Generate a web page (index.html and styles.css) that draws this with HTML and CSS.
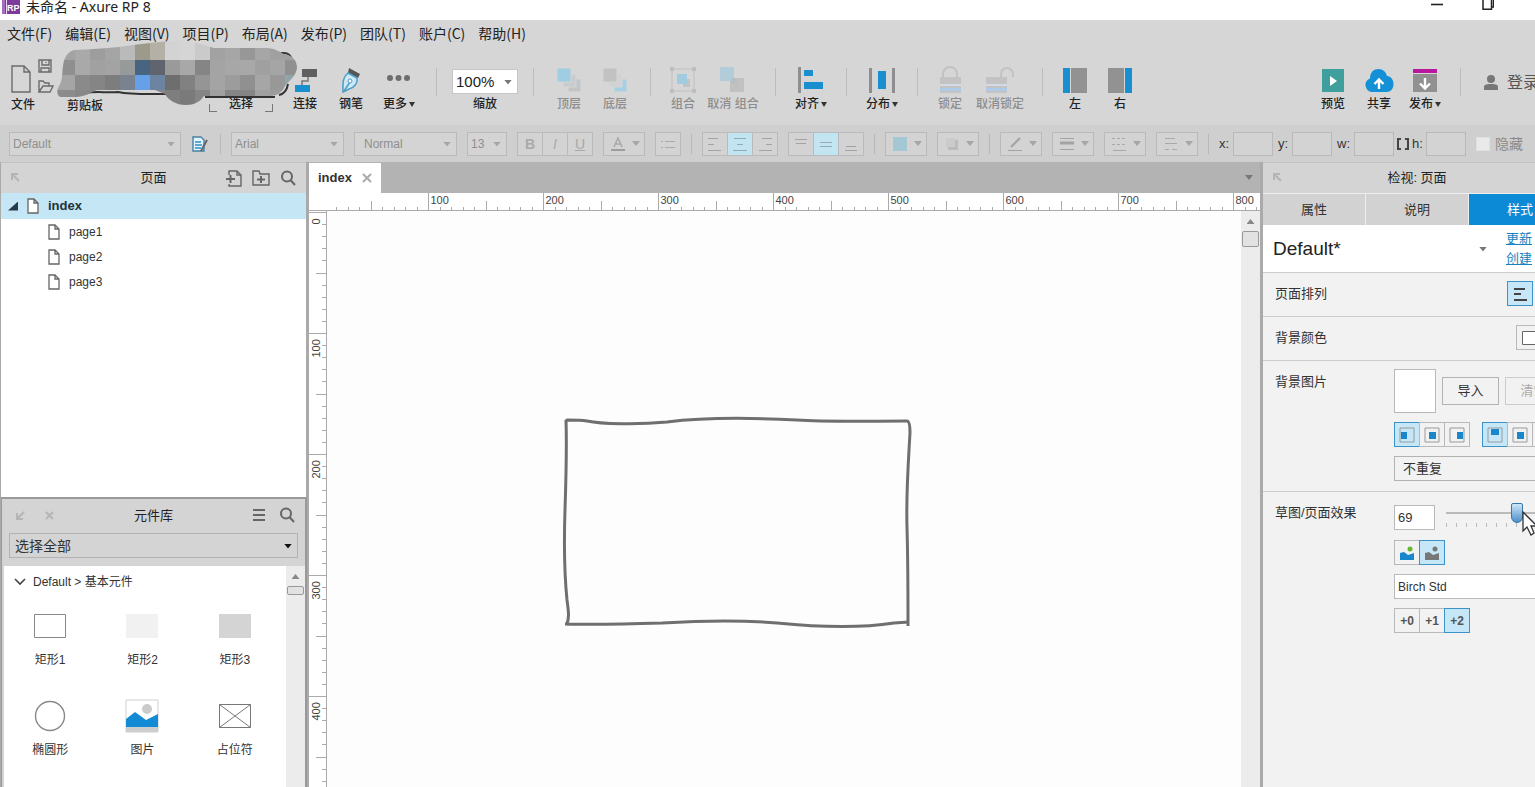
FILE: index.html
```html
<!DOCTYPE html>
<html lang="zh-CN">
<head>
<meta charset="utf-8">
<title>未命名 - Axure RP 8</title>
<link rel="stylesheet" href="styles.css">
</head>
<body>
<div class="app">
  <header class="titlebar">
    <svg class="logo" width="18" height="14" viewBox="0 0 18 14"><path d="M0 0h18v14H0z" fill="#7d3c9b"/><path d="M0 0h3v14H0z" fill="#a66cc0"/><path d="M4 0h1v14H4z" fill="#e9d9f0"/><text x="5" y="11" class="logo-text">RP</text></svg>
    <h1 class="title">未命名 - Axure RP 8</h1>
    <div class="window-buttons">
      <button class="win-btn" aria-label="最小化"><svg width="12" height="12"><path d="M0 4.5h12" stroke="#222" stroke-width="1.6"/></svg></button>
      <button class="win-btn" aria-label="还原"><svg width="12" height="12"><path d="M1 0v9.3h8.500V0M10 7h1.500V0" fill="none" stroke="#222" stroke-width="1.5"/></svg></button>
    </div>
  </header>

  <nav class="menu">
    <button>文件(F)</button><button>编辑(E)</button><button>视图(V)</button><button>项目(P)</button><button>布局(A)</button><button>发布(P)</button><button>团队(T)</button><button>账户(C)</button><button>帮助(H)</button>
  </nav>

  <div class="toolbar">
    <button class="tool tool-file"><svg width="44" height="38" viewBox="0 0 44 38" fill="none" stroke="#6b6b6b" stroke-width="1.400"><path d="M1 9h12l6 6v20H1zM13 9v6h6"/><path d="M28 3h12v12H28zM31 3v5h7V3M30 15v-4h8v4M35 5v1"/><path d="M28 35V24h4l2 2h4v3M28 35l4-6h10l-3 6z"/></svg><span>文件</span></button>
    <button class="tool tool-clip"><span>剪贴板</span></button>
    <button class="tool tool-select"><span class="bracketed">选择</span></button>
    <button class="tool"><svg width="28" height="28" viewBox="0 0 28 28"><path d="M11 3h15v8H11z" fill="#5f5f5f"/><path d="M17 11v4h-6v4" fill="none" stroke="#777" stroke-width="1.500"/><path d="M4 19h15v7H4z" fill="#1a8fd0"/></svg><span>连接</span></button>
    <button class="tool"><svg width="28" height="28" viewBox="0 0 28 28"><path d="M12 2l11 6-2 4-10-5z" fill="#555"/><path d="M11 7l9 5c1 5-3 10-8 11l-6 3c0-8-1-14 5-19z" fill="#cfe8f5" stroke="#4f9fcb" stroke-width="1.600"/><path d="M7 25l6-9" stroke="#4f9fcb" stroke-width="1.500"/><circle cx="13" cy="15" r="2" fill="#fff" stroke="#4f9fcb"/></svg><span>钢笔</span></button>
    <button class="tool tool-right"><svg width="28" height="28" viewBox="0 0 28 28" fill="#6d6d6d"><circle cx="5" cy="12" r="3"/><circle cx="13.500" cy="12" r="3"/><circle cx="22" cy="12" r="3"/></svg><span>更多<i class="caret"></i></span></button>
    <i class="sep"></i>
    <div class="tool tool-zoom"><div class="drop zoom"><select id="zoom"><option>100%</option></select></div><label for="zoom">缩放</label></div>
    <i class="sep"></i>
    <button class="tool" disabled><svg width="28" height="28" viewBox="0 0 28 28" stroke="#d6d6d6"><path d="M13 13h13v13H13z" fill="#c2c5c8"/><path d="M8 8h13v13H8z" fill="#c9cccf"/><path d="M2 2h14v14H2z" fill="#9fcde2"/></svg><span>顶层</span></button>
    <button class="tool" disabled><svg width="28" height="28" viewBox="0 0 28 28" stroke="#d6d6d6"><path d="M13 13h13v13H13z" fill="#a5d0e4"/><path d="M8 8h13v13H8z" fill="#d0d2d3"/><path d="M2 2h14v14H2z" fill="#c2c2c2"/></svg><span>底层</span></button>
    <i class="sep"></i>
    <button class="tool tool-narrow" disabled><svg width="28" height="28" viewBox="0 0 28 28"><path d="M3 3h22v22H3z" fill="none" stroke="#c0c0c0"/><path d="M14 13h7v8h-7z" fill="#bfc4c8"/><path d="M8 8h10v10H8z" fill="#a1cce0"/><path d="M1 1h4v4H1zM23 1h4v4h-4zM1 23h4v4H1zM23 23h4v4h-4z" fill="#bebebe"/></svg><span>组合</span></button>
    <button class="tool tool-wide" disabled><svg width="28" height="28" viewBox="0 0 28 28"><path d="M11 12h14v14H11z" fill="#c1c1c1"/><path d="M1 1h14v14H1z" fill="#b2ccda"/><path d="M12 12h6v6h-6z" fill="#b8bec2"/></svg><span>取消 组合</span></button>
    <i class="sep"></i>
    <button class="tool"><svg width="28" height="28" viewBox="0 0 28 28"><path d="M1 1h3v26H1z" fill="#8f8f8f"/><path d="M7 4h9v6H7zM7 16h19v7H7z" fill="#1a8fd0"/></svg><span>对齐<i class="caret"></i></span></button>
    <i class="sep"></i>
    <button class="tool"><svg width="28" height="28" viewBox="0 0 28 28"><path d="M1 2h3v25H1zM24 2h3v25h-3z" fill="#8f8f8f"/><path d="M10 5h8v18h-8z" fill="#1a8fd0"/></svg><span>分布<i class="caret"></i></span></button>
    <i class="sep"></i>
    <button class="tool tool-narrow" disabled><svg width="28" height="28" viewBox="0 0 28 28"><path d="M7 12V8a7 7 0 0 1 14 0v4" fill="none" stroke="#c2c2c2" stroke-width="2"/><path d="M4 11h21v16H4z" fill="#c3c3c3"/><path d="M4 18h21v2H4z" fill="#d3dbe4"/><path d="M4 22h21v3H4z" fill="#adcbe4"/></svg><span>锁定</span></button>
    <button class="tool tool-wide" disabled><svg width="28" height="28" viewBox="0 0 28 28"><path d="M15 11V8a6 6 0 0 1 12 0v3" fill="none" stroke="#c2c2c2" stroke-width="2"/><path d="M0 11h21v16H0z" fill="#c3c3c3"/><path d="M0 18h21v2H0z" fill="#d3dbe4"/><path d="M0 22h21v3H0z" fill="#adcbe4"/></svg><span>取消锁定</span></button>
    <i class="sep"></i>
    <button class="tool tool-narrow"><svg width="28" height="28" viewBox="0 0 28 28"><path d="M2 2h7v25H2z" fill="#1a8fd0"/><path d="M10 2h16v25H10z" fill="#929292"/></svg><span>左</span></button>
    <button class="tool tool-right"><svg width="28" height="28" viewBox="0 0 28 28"><path d="M19 2h7v25h-7z" fill="#1a8fd0"/><path d="M2 2h16v25H2z" fill="#929292"/></svg><span>右</span></button>
    <div class="toolbar-end">
      <button class="tool"><svg width="28" height="28" viewBox="0 0 28 28"><path d="M3 3h22v23H3z" fill="#3f9f9c"/><path d="M11 10l7 5-7 5z" fill="#fff"/></svg><span>预览</span></button>
      <button class="tool"><svg width="30" height="28" viewBox="0 0 30 28"><path d="M8 26a7 7 0 0 1-2-13.500C6 6 10 3 14.500 3S22 6 23 10c4 0 6.500 4 6.500 8 0 5-3 8-7 8z" fill="#1490d6"/><path d="M15 23v-9M10.500 18l4.500-4.500 4.500 4.500" fill="none" stroke="#fff" stroke-width="2.400"/></svg><span>共享</span></button>
      <button class="tool"><svg width="28" height="28" viewBox="0 0 28 28"><path d="M2 3h24v4H2z" fill="#b9189e"/><path d="M2 8h24v18H2z" fill="#919191"/><path d="M14 12v10M9 17.500l5 5 5-5" fill="none" stroke="#fff" stroke-width="2.400"/></svg><span>发布<i class="caret"></i></span></button>
      <i class="sep"></i>
      <button class="login"><svg width="16" height="18" viewBox="0 0 16 18" fill="#777"><circle cx="8" cy="5" r="4"/><path d="M1 16v-3c0-3 4-3 7-3s7 0 7 3v3z"/></svg>登录</button>
    </div>
    <svg class="mosaic" width="242" height="66" viewBox="56 40 242 66" aria-hidden="true">
      <defs><clipPath id="blob"><path d="M75 50C95 49 115 48 133 45C150 43 165 41 181 41C195 42 205 45 214 48H268C276 49 280 52 284 54C292 55 297 60 297 68C296 76 290 80 285 86C282 93 276 96 270 96H204C200 102 194 105 186 105C176 105 168 100 165 94L155 90H97C90 93 84 97 76 97H62C57 97 56 91 59 86C63 80 62 72 63 66C64 57 68 51 75 50Z"/></clipPath></defs>
      <path d="M272 53h12c4 0 7 3 8 7M288 84c-1 6-4 10-9 11M86 93c10-2 20 0 32-1 14 3 30 2 52 2M205 97h70" fill="none" stroke="#333" stroke-width="2"/>
      <g clip-path="url(#blob)" id="mosaic-cells"></g>
    </svg>
  </div>

  <div class="format">
    <div class="drop f-style"><select aria-label="样式" disabled><option>Default</option></select></div>
    <button class="plain" aria-label="样式管理"><svg width="19" height="18" viewBox="0 0 19 18"><path d="M2 2h8l3 3v11H2z" fill="#e3f3fb" stroke="#4682a5" stroke-width="1.400"/><path d="M4 7h6M4 10h7M4 13h6" stroke="#2b93c8" stroke-width="1.300"/><path d="M16 5l-6 11" stroke="#666" stroke-width="2"/></svg></button>
    <i class="bar"></i>
    <div class="drop f-font"><select aria-label="字体" disabled><option>Arial</option></select></div>
    <div class="drop f-weight"><select aria-label="字重" disabled><option>Normal</option></select></div>
    <div class="drop f-size"><select aria-label="字号" disabled><option>13</option></select></div>
    <div class="seg"><button disabled><b>B</b></button><button disabled><em>I</em></button><button disabled><u>U</u></button></div>
    <button class="pick" disabled aria-label="文字颜色"><svg width="18" height="18" viewBox="0 0 18 18"><path d="M5 12l4-9 4 9M6.500 9h5" fill="none" stroke="#a9a9a9" stroke-width="1.500"/><path d="M2 14h14v2H2z" fill="#9d9d9d"/></svg><i class="arrow"></i></button>
    <div class="seg"><button disabled aria-label="列表"><svg width="18" height="18" viewBox="0 0 18 18" stroke="#ababab"><path d="M2 6.500h2M6 6.500h10M2 12.500h2M6 12.500h10"/></svg></button></div>
    <i class="bar"></i>
    <div class="seg">
      <button disabled aria-label="左对齐"><svg width="18" height="18" viewBox="0 0 18 18" stroke="#a3a3a3"><path d="M2 3.500h10M2 9.500h6M2 15.500h13"/></svg></button>
      <button class="on" aria-label="居中"><svg width="18" height="18" viewBox="0 0 18 18" stroke="#93aab4"><path d="M3 3.500h12M6 9.500h6M2 15.500h14"/></svg></button>
      <button disabled aria-label="右对齐"><svg width="18" height="18" viewBox="0 0 18 18" stroke="#a3a3a3"><path d="M6 3.500h10M10 9.500h6M3 15.500h13"/></svg></button>
    </div>
    <div class="seg">
      <button disabled aria-label="顶部"><svg width="18" height="18" viewBox="0 0 18 18" stroke="#a3a3a3"><path d="M3 4.500h12M4 8.500h10"/></svg></button>
      <button class="on" aria-label="中部"><svg width="18" height="18" viewBox="0 0 18 18" stroke="#93aab4"><path d="M3 7.500h12M3 11.500h12"/></svg></button>
      <button disabled aria-label="底部"><svg width="18" height="18" viewBox="0 0 18 18" stroke="#a3a3a3"><path d="M4 11.500h10M3 15.500h12"/></svg></button>
    </div>
    <i class="bar"></i>
    <button class="pick" disabled aria-label="填充"><svg width="18" height="18"><path d="M2 2h14v14H2z" fill="#a4c7d4"/></svg><i class="arrow"></i></button>
    <button class="pick" disabled aria-label="阴影"><svg width="18" height="18"><path d="M5 5h10v10H5z" fill="#bcbcbc"/><path d="M3 3h9v9H3z" fill="#cbcbcb"/></svg><i class="arrow"></i></button>
    <i class="bar"></i>
    <button class="pick" disabled aria-label="线条颜色"><svg width="18" height="18" stroke="#a3a3a3"><path d="M5 12l9-9" stroke-width="2"/><path d="M2 15.500h14"/></svg><i class="arrow"></i></button>
    <button class="pick" disabled aria-label="线宽"><svg width="18" height="18" stroke="#a3a3a3"><path d="M2 3.500h14" /><path d="M2 8h14" stroke-width="3"/><path d="M2 14.500h14"/></svg><i class="arrow"></i></button>
    <button class="pick" disabled aria-label="线型"><svg width="18" height="18" stroke="#a9a9a9"><path d="M2 3.500h14" stroke-dasharray="3 2"/><path d="M2 9.500h14" stroke-dasharray="3 2"/><path d="M3 15.500h13"/></svg><i class="arrow"></i></button>
    <button class="pick" disabled aria-label="箭头"><svg width="18" height="18" stroke="#a9a9a9"><path d="M3 3.500h10M3 8.500h12M3 14.500h4M10 14.500h5"/></svg><i class="arrow"></i></button>
    <i class="bar"></i>
    <div class="coords">
      <label>x:<input></label><label>y:<input></label><label class="w">w:<input></label>
      <svg width="14" height="14" viewBox="0 0 14 14" fill="none" stroke="#444" stroke-width="2"><path d="M5 2H2v10h3M9 2h3v10H9"/></svg>
      <label>h:<input></label>
    </div>
    <label class="hide"><input type="checkbox" disabled>隐藏</label>
  </div>

  <main class="work">
    <aside class="left">
      <section class="pages">
        <header class="head"><svg width="12" height="12" class="dim"><path d="M2 8V2h6M2 2l7 7" /></svg><h2>页面</h2>
          <div class="head-icons">
            <button class="plain" aria-label="添加页面"><svg width="18" height="18" viewBox="0 0 18 18" class="ico"><path d="M4 6V2h8l4 4v11H4v-2M12 2v4h4"/><path d="M1 10h9M5.500 6v8" stroke-width="2"/></svg></button>
            <button class="plain" aria-label="添加文件夹"><svg width="18" height="18" viewBox="0 0 18 18" class="ico"><path d="M1 16V2h6l1 3h9v11z"/><path d="M5 10.500h8M9 7v7" stroke-width="2"/></svg></button>
            <button class="plain" aria-label="搜索"><svg width="18" height="18" viewBox="0 0 18 18" class="ico lens"><circle cx="8" cy="7.500" r="5"/><path d="M11.500 11l4.500 5"/></svg></button>
          </div>
        </header>
        <ul class="tree">
          <li class="node root"><i class="open"></i><svg width="12" height="16" class="doc"><path d="M1 1h6l4 4v10H1zM7 1v4h4"/></svg>index</li>
          <li class="node"><svg width="12" height="16" class="doc"><path d="M1 1h6l4 4v10H1zM7 1v4h4"/></svg>page1</li>
          <li class="node"><svg width="12" height="16" class="doc"><path d="M1 1h6l4 4v10H1zM7 1v4h4"/></svg>page2</li>
          <li class="node"><svg width="12" height="16" class="doc"><path d="M1 1h6l4 4v10H1zM7 1v4h4"/></svg>page3</li>
        </ul>
      </section>
      <section class="library">
        <header class="head"><div class="pair"><svg width="12" height="12" class="dim"><path d="M2 3v6h6M2 9l7-7"/></svg><svg width="12" height="12" class="dim"><path d="M2 2l7 7M9 2l-7 7"/></svg></div><h2>元件库</h2>
          <div class="head-icons">
            <button class="plain" aria-label="菜单"><svg width="18" height="18" viewBox="0 0 18 18" class="ico"><path d="M1 3h12M1 8h12M1 13h12" stroke-width="2"/></svg></button>
            <button class="plain" aria-label="搜索"><svg width="18" height="18" viewBox="0 0 18 18" class="ico lens"><circle cx="7" cy="6.500" r="5"/><path d="M10.500 10l4.500 5"/></svg></button>
          </div>
        </header>
        <div class="drop lib-select"><select aria-label="元件库"><option>选择全部</option></select></div>
        <div class="lib-body">
          <div class="lib-list">
            <h3><svg width="12" height="8"><path d="M1 1l5 5 5-5" fill="none" stroke="#444" stroke-width="1.600"/></svg>Default &gt; 基本元件</h3>
            <ul class="widgets">
              <li><svg width="34" height="34"><path d="M1.500 5.500h31v23h-31z" fill="#fff" stroke="#888"/></svg>矩形1</li>
              <li><svg width="34" height="34"><path d="M1 5h32v24H1z" fill="#f1f1f1"/></svg>矩形2</li>
              <li><svg width="34" height="34"><path d="M1 5h32v24H1z" fill="#d4d4d4"/></svg>矩形3</li>
              <li><svg width="34" height="34"><circle cx="17" cy="17" r="14.500" fill="#fff" stroke="#888" stroke-width="1.400"/></svg>椭圆形</li>
              <li><svg width="34" height="34"><path d="M1 1h32v32H1z" fill="#fff" stroke="#d0d0d0"/><circle cx="22" cy="10" r="5" fill="#cbcbcb"/><path d="M1 28V20l9-7 11 8 12-6v13z" fill="#128bd4"/><path d="M1 28h32v5H1z" fill="#cdcdcd"/></svg>图片</li>
              <li><svg width="34" height="34"><path d="M1.500 5.500h31v23h-31zl31 23M32.500 5.500l-31 23" fill="#fff" stroke="#777"/></svg>占位符</li>
            </ul>
          </div>
          <div class="scroll small"><i class="up"></i><i class="thumb"></i></div>
        </div>
      </section>
    </aside>

    <section class="center">
      <div class="tabs"><button class="tab">index<svg width="10" height="10"><path d="M1 1l8 8M9 1L1 9" stroke="#aaa" stroke-width="2"/></svg></button><i class="arrow"></i></div>
      <div class="ruler-top"><svg id="ruler-x" class="ruler"></svg></div>
      <div class="stage">
        <svg id="ruler-y" class="ruler side"></svg>
        <div class="canvas">
          <svg class="sketch" width="354" height="216" viewBox="560 414 354 216" fill="none" stroke="#6f6f6f" stroke-width="3" stroke-linejoin="round"><path d="M566 421l1-1c8 0 14 0 20 1 14 3 50 4 80 1 40-5 90-4 130-2 30 2 70 1 110 1q3 0 3 12c-2 35-4 60-3 95 1 33 1 60 1 98"/><path d="M566 420c1 30 0 60-1 90-1 30-1 60 2 90 2 14 2 18 0 24"/><path d="M565 624c30 1 65 0 97-1 33-2 80-3 115 0 40 4 85 5 117 0l15-1" /></svg>
        </div>
        <div class="scroll"><i class="up"></i><i class="thumb"></i></div>
      </div>
    </section>

    <aside class="right">
      <div class="inspector">
        <header class="head"><svg width="12" height="12" class="dim"><path d="M2 8V2h6M2 2l7 7" /></svg><h2>检视: 页面</h2></header>
        <div class="itabs"><button>属性</button><button>说明</button><button class="active">样式</button></div>
        <div class="style-row"><div class="drop big"><select aria-label="页面样式"><option>Default*</option></select></div><div class="links"><a href="#">更新</a><a href="#">创建</a></div></div>
        <div class="row one"><span>页面排列</span><button class="sq on push" aria-label="左对齐"><svg width="18" height="18" stroke="#444" stroke-width="2"><path d="M3 4h11M3 9h7M3 15h13"/></svg></button></div>
        <div class="row one"><span>背景颜色</span><button class="sq color" aria-label="颜色"><svg width="16" height="16"><path d="M1.500 1.500h14v13h-14z" fill="#fff" stroke="#666"/></svg></button></div>
        <div class="row"><span>背景图片</span>
          <div class="controls">
            <div class="line imgline"><i class="preview"></i><button class="btn">导入</button><button class="btn" disabled>清空</button></div>
            <div class="line place">
              <div class="group"><button class="sq on" aria-label="左"><svg width="16" height="16"><path d="M1 1h14v14H1z" fill="none" stroke="#999"/><path d="M2 5h6v7H2z" fill="#1a86cc"/></svg></button><button class="sq" aria-label="中"><svg width="16" height="16"><path d="M1 1h14v14H1z" fill="none" stroke="#999"/><path d="M5 5h7v7H5z" fill="#1a86cc"/></svg></button><button class="sq" aria-label="右"><svg width="16" height="16"><path d="M1 1h14v14H1z" fill="none" stroke="#999"/><path d="M8 5h6v7H8z" fill="#1a86cc"/></svg></button></div>
              <div class="group"><button class="sq on" aria-label="上"><svg width="16" height="16"><path d="M1 1h14v14H1z" fill="none" stroke="#999"/><path d="M4 2h8v6H4z" fill="#1a86cc"/></svg></button><button class="sq" aria-label="中"><svg width="16" height="16"><path d="M1 1h14v14H1z" fill="none" stroke="#999"/><path d="M5 5h7v7H5z" fill="#1a86cc"/></svg></button><button class="sq" aria-label="下"><svg width="16" height="16"><path d="M1 1h14v14H1z" fill="none" stroke="#999"/><path d="M4 8h8v6H4z" fill="#1a86cc"/></svg></button></div>
            </div>
            <div class="drop repeat"><select aria-label="重复"><option>不重复</option></select></div>
          </div>
        </div>
        <div class="row last"><label for="amount">草图/页面效果</label>
          <div class="controls">
            <div class="line slide"><input id="amount" class="num" value="69"><div class="slider"><input type="range" min="0" max="100" value="69" aria-label="草图程度"><i class="dots"></i></div></div>
            <div class="group"><button class="sq" aria-label="彩色"><svg width="18" height="18"><circle cx="12" cy="5" r="2.500" fill="#67b82e"/><path d="M2 9l4-1 4 3 6-2v7H2z" fill="#1a86cc"/></svg></button><button class="sq on" aria-label="黑白"><svg width="18" height="18"><circle cx="12" cy="5" r="2.500" fill="#777"/><path d="M2 9l4-1 4 3 6-2v7H2z" fill="#777"/></svg></button></div>
            <input class="font" value="Birch Std" aria-label="字体">
            <div class="group"><button class="sq">+0</button><button class="sq">+1</button><button class="sq on">+2</button></div>
          </div>
        </div>
        <svg class="cursor" width="16" height="26" viewBox="0 0 16 26"><path d="M1 1v19l4-4 4 8 3-2-3-7h6z" fill="#fff" stroke="#333" stroke-width="1.300"/></svg>
      </div>
    </aside>
  </main>
</div>
<script src="app.js"></script>
</body>
</html>
```

FILE: styles.css
```css
* { box-sizing: border-box; }
body {
  margin: 0;
  font: 12px/16px "Liberation Sans", "Noto Sans CJK SC", sans-serif;
  color: #333;
  overflow: hidden;
}
button, input, select { font: inherit; color: inherit; margin: 0; }
button { background: none; border: 0; padding: 0; white-space: nowrap; }
ul { list-style: none; margin: 0; padding: 0; }
h1, h2, h3 { margin: 0; font-size: 12px; font-weight: 400; }
svg { display: block; flex: none; }
i { display: block; flex: none; }

.app { display: flex; flex-direction: column; height: 100vh; background: #d6d6d6; }

.titlebar { display: flex; align-items: flex-start; gap: 6px; height: 20px; padding-left: 2px; background: #fff; flex: none; }
.logo-text { font: bold 9px "Liberation Sans", sans-serif; fill: #fff; }
.title { font: 14px/14px "Noto Sans", "Noto Sans CJK SC", sans-serif; color: #222; flex: 1; }
.window-buttons { display: flex; gap: 39px; padding-right: 41px; }

.menu { display: flex; gap: 13px; align-items: center; height: 28px; padding: 0 7px 2px; flex: none; }
.menu button { font: 14px/20px "Noto Sans CJK SC", sans-serif; color: #222; }

.toolbar { position: relative; display: flex; align-items: flex-start; height: 77px; padding-top: 18px; flex: none; }
.tool { display: flex; flex-direction: column; align-items: center; gap: 2px; width: 46px; color: #222; flex: none; font-weight: 500; }
.tool span { display: flex; align-items: center; gap: 2px; }
.tool svg { height: 28px; }
.tool:disabled { color: #8d8d8d; }
.tool-file { margin-top: -9px; width: 60px; padding-left: 11px; align-items: flex-start; }
.tool-file svg { height: 38px; }
.tool-clip { width: 50px; padding-top: 32px; }
.tool-select { width: 172px; padding: 30px 9px 0 0; align-items: flex-end; }
.tool-select .bracketed { justify-content: center; width: 64px; background:
  linear-gradient(#777, #777) 0 8px / 1px 8px no-repeat, linear-gradient(#777, #777) 0 100% / 8px 1px no-repeat,
  linear-gradient(#777, #777) 100% 8px / 1px 8px no-repeat, linear-gradient(#777, #777) 100% 100% / 8px 1px no-repeat; }
.tool-narrow { width: 40px; }
.tool-right { width: 50px; }
.tool-wide { width: 60px; }
.tool-zoom { width: 72px; padding-top: 3px; }
.caret { border: 3px solid transparent; border-top: 5px solid #333; border-bottom: 0; }
.sep { width: 1px; height: 28px; margin: 2px 12px 0; background: #bdbdbd; }
.toolbar-end { display: flex; margin-left: auto; }
.login { display: flex; align-items: center; gap: 8px; width: 62px; height: 34px; padding-left: 10px; font-size: 16px; color: #555; }
.mosaic { position: absolute; left: 56px; top: -8px; }

.drop { position: relative; flex: none; }
.drop select { appearance: none; display: block; width: 100%; height: 100%; padding: 0 6px; background: none; border: 0; border-radius: 0; opacity: 1; }
.drop::after, .arrow { content: ""; width: 8px; height: 5px; background: #777; clip-path: polygon(0 0, 100% 0, 50% 100%); }
.drop::after { position: absolute; right: 5px; top: 50%; margin-top: -2px; pointer-events: none; }
.drop.zoom { width: 66px; height: 25px; background: #fff; border: 1px solid #c6c6c6; font-size: 15px; font-weight: 400; }
.drop.zoom select { padding: 0 3px; }

.format { display: flex; align-items: center; gap: 10px; height: 37px; padding-left: 9px; background: #cfcfcf; flex: none; white-space: nowrap; }
.format .drop { height: 24px; border: 1px solid #bababa; background: #d4d4d4; color: #969696; }
.format .drop select { padding: 0 3px; color: #8f8f8f; }
.format .drop::after, .format .arrow { background: #a6a6a6; }
.format .f-style { width: 172px; }
.format .f-font { width: 113px; }
.format .f-weight { width: 103px; }
.format .f-weight select { padding-left: 9px; }
.format .f-size { width: 40px; }
.bar { width: 1px; height: 20px; background: #b8b8b8; }
.seg { display: flex; border: 1px solid #bababa; background: #d3d3d3; height: 24px; flex: none; }
.seg button { display: grid; place-items: center; width: 24px; font-size: 14px; color: #a9a9a9; }
.seg button + button { width: 25px; border-left: 1px solid #bababa; }
.seg .on { background: #c3e5f2; }
.pick { display: flex; align-items: center; justify-content: space-between; width: 42px; height: 24px; padding: 0 4px 0 5px; border: 1px solid #bababa; background: #d3d3d3; flex: none; }
.coords { display: flex; align-items: center; gap: 5px; font-size: 13px; }
.coords label { display: flex; align-items: center; justify-content: space-between; width: 54px; }
.coords .w { width: 57px; }
.coords svg { margin: 0 -3px; }
.coords input { width: 40px; height: 24px; border: 1px solid #b9b9b9; background: #d3d3d3; }
.hide { display: flex; align-items: center; gap: 5px; color: #8b8b8b; font-size: 14px; }
.hide input { appearance: none; width: 14px; height: 14px; background: #e9e9e9; border: 1px solid #e0e0e0; }

.work { display: flex; flex: 1; min-height: 0; }
.left { display: flex; flex-direction: column; width: 307px; border-left: 1px solid #aaa; flex: none; background: #fff; }
.head { position: relative; display: flex; align-items: center; justify-content: space-between; height: 31px; padding: 0 9px; background: #d4d4d4; border-top: 1px solid #c3c3c3; flex: none; }
.head h2 { position: absolute; left: 0; right: 0; text-align: center; color: #222; pointer-events: none; font-size: 13px; }
.dim { fill: none; stroke: #b5b5b5; stroke-width: 2; }
.pair { display: flex; gap: 17px; padding-left: 4px; }
.head-icons { display: flex; gap: 9px; }
.ico { fill: none; stroke: #666; stroke-width: 1.4; }
.lens { stroke-width: 2; }
.pages { height: 335px; flex: none; border-right: 1px solid #aaa; }
.node { display: flex; align-items: center; gap: 9px; height: 25px; padding-left: 47px; }
.node.root { height: 26px; padding-left: 7px; font-weight: 700; font-size: 13px; background: #c5e6f5; color: #22323c; }
.open { width: 10px; height: 9px; background: #253b47; clip-path: polygon(100% 0, 100% 100%, 0 100%); }
.doc { fill: #fff; stroke: #666; stroke-width: 1.3; }
.library { display: flex; flex-direction: column; flex: 1; min-height: 0; border: 1px solid #999; border-width: 2px 2px 0 1px; background: #d4d4d4; }
.library .head { border: 0; height: 34px; padding: 0 8px 0 9px; }
.lib-select { height: 25px; margin: 0 7px 8px; border: 1px solid #b3b3b3; font-size: 14px; }
.lib-select::after { background: #111; }
.lib-select select { padding: 0 5px; }
.lib-body { display: flex; flex: 1; min-height: 0; margin-left: 2px; background: #fff; }
.lib-list { flex: 1; overflow: hidden; }
.lib-list h3 { display: flex; align-items: center; gap: 7px; height: 32px; padding-left: 10px; }
.widgets { display: grid; grid-template-columns: repeat(3, 1fr); grid-auto-rows: 90px; padding: 11px 5px 0 0; }
.widgets li { display: flex; flex-direction: column; align-items: center; gap: 9px; }
.scroll { display: flex; flex-direction: column; align-items: center; gap: 7px; width: 19px; padding-top: 8px; background: #ececec; flex: none; }
.up { width: 8px; height: 5px; background: #888; clip-path: polygon(50% 0, 100% 100%, 0 100%); }
.thumb { width: 17px; height: 16px; border: 1px solid #999; border-radius: 2px; background: #e2e2e2; }
.small .thumb { height: 9px; }

.center { display: flex; flex-direction: column; flex: 1; min-width: 0; border-left: 2px solid #aaa; border-right: 3px solid #aaa; background: #fff; }
.tabs { display: flex; align-items: center; justify-content: space-between; height: 31px; padding-right: 7px; background: #b3b3b3; flex: none; }
.tab { display: flex; align-items: center; gap: 10px; align-self: stretch; padding: 0 9px; background: #fff; font-weight: 700; font-size: 13px; margin-top: 1px; }
.ruler-top { height: 18px; border-bottom: 1px solid #aaa; flex: none; }
.ruler { width: 100%; height: 100%; font: 11px "Liberation Sans", sans-serif; fill: #444; }
.ruler path { fill: none; stroke: #aaa; }
.stage { display: flex; flex: 1; min-height: 0; }
.side { width: 18px; border-right: 1px solid #aaa; }
.canvas { position: relative; flex: 1; background: #fdfdfd; }
.sketch { position: absolute; left: 233px; top: 203px; }

.right { width: 272px; overflow: hidden; flex: none; background: #f2f2f2; }
.inspector { position: relative; width: 308px; }
.itabs { display: grid; grid-template-columns: repeat(3, 1fr); gap: 1px; padding-top: 1px; background: #eee; }
.itabs button { height: 31px; background: #d2d2d2; font-size: 13px; }
.itabs .active { background: #0c8ad5; color: #fff; }
.style-row { display: flex; height: 48px; background: #fff; border-bottom: 1px solid #ccc; }
.big { width: 229px; font-size: 19px; color: #222; }
.big select { padding: 0 10px; }
.links { display: grid; align-content: center; gap: 3px; padding-left: 14px; font-size: 13px; line-height: 17px; }
.links a { color: #1582bd; }
.row { display: flex; align-items: flex-start; padding: 8px 0 10px 12px; border-bottom: 1px solid #ccc; font-size: 13px; }
.row > span, .row > label { width: 119px; padding: 5px 0; flex: none; }
.row.one { height: 44px; }
.row .push { margin-left: 113px; }
.row .color { margin-left: 122px; }
.row.last { border: 0; padding-top: 6px; }
.row.last > label { padding-top: 7px; }
.sq { display: grid; place-items: center; width: 26px; height: 25px; border: 1px solid #b9b9b9; color: #555; font-size: 12px; font-weight: 700; flex: none; }
.sq.on { background: #c5e7f8; border-color: #3c93c7; }
.group { display: flex; }
.group .sq + .sq { margin-left: -1px; }
.controls { display: flex; flex-direction: column; gap: 9px; flex: 1; }
.line { display: flex; align-items: center; }
.imgline { gap: 6px; }
.place { gap: 12px; }
.preview { width: 42px; height: 44px; background: #fff; border: 1px solid #b9b9b9; }
.btn { width: 57px; height: 28px; border: 1px solid #b3b3b3; }
.btn:disabled { color: #aaa; border-color: #ccc; }
.repeat { height: 25px; border: 1px solid #b3b3b3; }
.repeat select { padding: 0 8px; }
.slide { gap: 11px; margin-top: 5px; }
.num { width: 41px; height: 25px; padding: 0 3px; border: 1px solid #b9b9b9; background: #fff; }
.slider { width: 106px; height: 28px; }
.slider input { appearance: none; display: block; width: 100%; height: 20px; background: linear-gradient(#bbb, #bbb) 0 50% / 100% 2px no-repeat; }
.slider input::-webkit-slider-thumb { appearance: none; width: 12px; height: 20px; background: linear-gradient(#cfe6f7, #4a90cb); border: 1px solid #3b78a8; border-radius: 2px 2px 6px 6px; }
.dots { height: 4px; background: repeating-linear-gradient(90deg, #bbb 0 1px, transparent 1px 10px); }
.font { width: 100%; height: 25px; padding: 0 3px; border: 1px solid #b9b9b9; background: #fff; font-size: 12px; }
.cursor { position: absolute; left: 259px; top: 349px; }
```

FILE: app.js
```js
const NS = 'http://www.w3.org/2000/svg';

function add(parent, name, attrs, text) {
  const el = document.createElementNS(NS, name);
  for (const key in attrs) el.setAttribute(key, attrs[key]);
  if (text !== undefined) el.textContent = text;
  parent.appendChild(el);
}

function drawRuler(id, origin, step, size, first, last, vertical) {
  const svg = document.getElementById(id);
  let ticks = '';
  for (let n = first; n <= last; n++) {
    const p = Math.round(origin + n * step / 10) + 0.5;
    const len = n % 10 === 0 ? size : n % 5 === 0 ? 10 : 4;
    ticks += vertical ? `M${size - len} ${p}h${len}` : `M${p} ${size - len}v${len}`;
    if (n % 10 === 0) {
      const label = n * 10;
      if (vertical) {
        add(svg, 'text', { transform: `translate(11 ${p + (label ? 24 : 12)}) rotate(-90)` }, label);
      } else {
        add(svg, 'text', { x: p + 2, y: 11 }, label);
      }
    }
  }
  add(svg, 'path', { d: ticks });
}

drawRuler('ruler-x', 4, 115, 18, 2, 82, false);
drawRuler('ruler-y', 1, 121, 17, 0, 47, true);

const rows = [
  ['#d6d6d6', '#a3a3a3', '#a9a9a9', '#9d9d9d', '#a5a5a5', '#bababa', '#9c9a8a', '#b4b0a6', '#d3d3d3', '#d5d5d5', '#cacaca', '#a2a2a2', '#a6a6a6', '#979797', '#a6a6a6', '#a0a0a0', '#a0a0a0'],
  ['#8f8f8f', '#8f8f8f', '#a9a9a9', '#a1a1a1', '#a3a3a3', '#969a98', '#486480', '#5f646e', '#9a9a9a', '#a8a8a8', '#858585', '#a4a4a4', '#a7a7a7', '#a8a8a8', '#a0a0a0', '#a5a5a5', '#909090'],
  ['#a5a5a5', '#a5a5a5', '#8a8a8a', '#858585', '#7d7d7d', '#79828e', '#66a1e8', '#6d83a2', '#6e6e6e', '#818181', '#959595', '#a4a4a4', '#9c9c9c', '#909090', '#a6a6a6', '#989898', '#91a3ab'],
  ['#8c8c8c', '#8c8c8c', '#888888', '#858585', '#858585', '#858585', '#858585', '#858585', '#7e7e7e', '#7a7a7a', '#858585', '#a0a0a0', '#858585', '#858585', '#a0a0a0', '#9c9c9c', '#9c9c9c']
];
const cells = document.getElementById('mosaic-cells');
rows.forEach((row, r) => row.forEach((fill, c) => {
  add(cells, 'rect', { x: 45 + c * 15, y: r === 0 ? 40 : 45 + r * 15, width: 15, height: r === 0 ? 20 : r === 3 ? 17 : 15, fill });
}));
```
